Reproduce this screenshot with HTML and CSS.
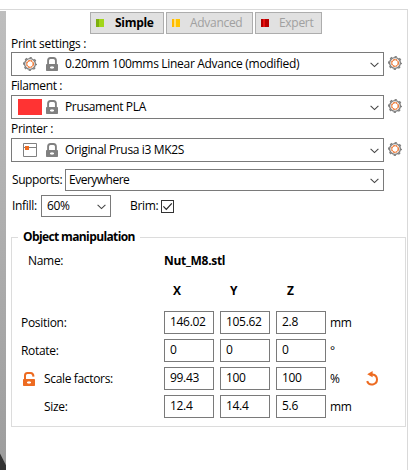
FILE: index.html
```html
<!DOCTYPE html>
<html lang="en">
<head>
<meta charset="utf-8">
<title>Print settings</title>
<link rel="stylesheet" href="styles.css">
</head>
<body>
<svg class="defs" aria-hidden="true">
  <symbol id="gear" viewBox="0 0 14 14">
    <circle cx="7" cy="7" r="5.4" fill="none" stroke="#808080" stroke-width="1.4"/>
    <circle cx="7" cy="7" r="6.3" fill="none" stroke="#808080" stroke-width="1.4" stroke-dasharray="2.3 2.648" stroke-dashoffset="1.15"/>
    <circle cx="7" cy="7" r="3.3" fill="none" stroke="#ed6b21" stroke-width="1.3" stroke-dasharray="2.1 .49"/>
  </symbol>
  <symbol id="lock" viewBox="0 0 12 14">
    <path d="M2.1 8V3.6Q2.1 1 4.5 1h3Q9.9 1 9.9 3.6V8" fill="none" stroke="#808080" stroke-width="1.9"/>
    <rect y="7" width="12" height="7" rx=".7" fill="#808080"/>
    <path d="M4 10.5h4M6 9.3v2.4" stroke="#fff" stroke-width="1.3"/>
  </symbol>
  <symbol id="unlock" viewBox="0 0 12 14">
    <path d="M2 8V3.6Q2 1 4.4 1h3.2Q10.3 1 10.5 4.6" fill="none" stroke="#ed6b21" stroke-width="2"/>
    <rect y="7" width="12" height="7" rx=".7" fill="#ed6b21"/>
    <path d="M4 10.5h4M6 9.3v2.4" stroke="#fff" stroke-width="1.3"/>
  </symbol>
  <symbol id="chevron" viewBox="0 0 9 6">
    <path d="M.6 .8l3.9 3.8L8.4 .8" fill="none" stroke="#444" stroke-width="1.1"/>
  </symbol>
</svg>
<div class="viewport"></div>
<main class="sidebar">
  <div class="modes">
    <button class="mode simple active"><i></i><span>Simple</span></button>
    <button class="mode advanced"><i></i><span>Advanced</span></button>
    <button class="mode expert"><i></i><span>Expert</span></button>
  </div>
  <div class="label l-print"><span>Print settings :</span></div>
  <div class="preset">
    <div class="combo"><svg class="pic"><use href="#gear"/></svg><svg class="lock"><use href="#lock"/></svg><span class="t-preset">0.20mm 100mms Linear Advance (modified)</span><svg class="chev"><use href="#chevron"/></svg></div>
    <svg class="edit"><use href="#gear"/></svg>
  </div>
  <div class="label l-fil"><span>Filament :</span></div>
  <div class="preset">
    <div class="combo"><i class="swatch"></i><svg class="lock"><use href="#lock"/></svg><span class="t-pla">Prusament PLA</span><svg class="chev"><use href="#chevron"/></svg></div>
    <svg class="edit"><use href="#gear"/></svg>
  </div>
  <div class="label l-printer"><span>Printer :</span></div>
  <div class="preset">
    <div class="combo"><svg class="pic" viewBox="0 0 14 14"><path d="M.5 .5h13v13H.5zM0 4.5h14" fill="none" stroke="#808080"/><rect x="2" y="3" width="4" height="4" fill="#ed6b21"/></svg><svg class="lock"><use href="#lock"/></svg><span class="t-mk">Original Prusa i3 MK2S</span><svg class="chev"><use href="#chevron"/></svg></div>
    <svg class="edit"><use href="#gear"/></svg>
  </div>
  <div class="supports"><span class="cap t-sup">Supports:</span><div class="combo small"><span class="t-every">Everywhere</span><svg class="chev"><use href="#chevron"/></svg></div></div>
  <div class="infill"><span class="cap t-inf">Infill:</span><div class="combo small"><span class="t-num">60%</span><svg class="chev"><use href="#chevron"/></svg></div><span class="brim">Brim:</span><svg class="check" viewBox="0 0 13 13"><rect x=".5" y=".5" width="12" height="12" fill="#fff" stroke="#333"/><path d="M2.4 6.4l2.9 2.9 5.5-6" fill="none" stroke="#222" stroke-width="1.2"/></svg></div>
  <fieldset class="group">
    <legend>Object manipulation</legend>
    <div class="name"><span>Name:</span><b>Nut_M8.stl</b></div>
    <div class="row axes"><span></span><b>X</b><b>Y</b><b>Z</b></div>
    <div class="row"><span class="t-pos">Position:</span><div class="field">146.02</div><div class="field">105.62</div><div class="field">2.8</div><span class="unit">mm</span></div>
    <div class="row"><span class="t-rot">Rotate:</span><div class="field">0</div><div class="field">0</div><div class="field">0</div><span class="unit">°</span></div>
    <div class="row"><span class="scale"><svg class="lock"><use href="#unlock"/></svg><em>Scale factors:</em></span><div class="field">99.43</div><div class="field">100</div><div class="field">100</div><span class="unit">%</span><svg class="reset" viewBox="0 0 13 15"><path d="M4.5 3.4h2a5.1 5.1 0 1 1-5.4 6.8" fill="none" stroke="#ed6b21" stroke-width="2"/><path d="M1.2 3.2L6.6 0v6.3z" fill="#ed6b21"/></svg></div>
    <div class="row"><span class="size">Size:</span><div class="field">12.4</div><div class="field">14.4</div><div class="field">5.6</div><span class="unit">mm</span></div>
  </fieldset>
</main>
</body>
</html>
```
FILE: styles.css
```css
* { box-sizing: border-box; }
body {
  margin: 0; width: 410px; height: 470px; overflow: hidden; background: #fff;
  display: flex; align-items: flex-start; color: #000;
  font: 12px/16px "Open Sans", "Noto Sans", sans-serif; letter-spacing: -.3px; white-space: nowrap;
}
.defs { position: absolute; width: 0; height: 0; }
svg { display: block; flex: none; }
.viewport {
  width: 6px; height: 459px; margin-top: 11px; flex: none;
  background: linear-gradient(63deg, #333 0 7px, transparent 8px) bottom / 6px 18px no-repeat, linear-gradient(#bebebe, #9d9d9d);
}
.sidebar { width: 402px; height: 461px; margin-top: 9px; padding: 3px 0 0 5px; border-right: 1px solid #d9d9d9; position: relative; }
.sidebar::before { content: ""; position: absolute; left: -6px; right: 0; top: 0; height: 1px; background: #d9d9d9; }
.modes { display: flex; gap: 2px; margin-left: 79px; height: 22px; }
.mode {
  width: 74px; padding: 0 0 0 5px; border: 1px solid #adadad; background: #e1e1e1; color: #a0a0a0;
  font: inherit; letter-spacing: inherit; display: flex; align-items: center;
}
.mode i { width: 8px; height: 8px; margin-right: 11px; }
.active { color: #000; font-weight: 700; }
.simple i { background: linear-gradient(90deg, #7daf10 3px, #a2d61a 3px); }
.advanced { width: 87px; }
.advanced i { background: linear-gradient(90deg, #ffb800 2px, #ffe07a 2px 4px, #ffc400 4px); margin-right: 10px; }
.expert { width: 67px; }
.expert i { background: linear-gradient(90deg, #b00000 2px, #e81010 2px 4px, #b80000 4px); margin-right: 10px; }
.label { height: 19px; line-height: 20px; }
.l-print { height: 18px; line-height: 19px; }
.l-fil { letter-spacing: -.35px; }
.l-printer { letter-spacing: -.3px; }
.preset { display: flex; height: 24px; }
.combo { width: 373px; height: 24px; border: 1px solid #7a7a7a; display: flex; align-items: center; position: relative; background: #fff; }
.combo .pic { width: 14px; height: 14px; margin: 0 9px 0 11px; }
.lock { width: 12px; height: 14px; }
.combo .lock { margin-right: 7px; }
.swatch { width: 24px; height: 16px; background: #f33; margin: 0 4px 0 6px; }
.t-preset { letter-spacing: -.31px; }
.t-pla { letter-spacing: -.36px; }
.t-mk { letter-spacing: -.34px; }
.t-every { letter-spacing: -.5px; }
.t-sup { letter-spacing: -.42px; }
.chev { width: 9px; height: 6px; margin: 2px 4px 0 auto; }
.edit { width: 14px; height: 14px; margin: 4px 0 0 4px; }
.small { height: 22px; padding-left: 3px; }
.supports { display: flex; margin-top: 7px; height: 22px; line-height: 22px; }
.supports .cap { width: 54px; padding-left: 1px; }
.supports .combo { width: 319px; }
.infill { display: flex; margin-top: 4px; height: 22px; line-height: 22px; }
.infill .cap { width: 30px; padding-left: 1px; }
.infill .combo { width: 70px; padding-left: 5px; }
.brim { width: 31px; margin-left: 19px; }
.check { width: 13px; height: 13px; margin: 5px 0 0; }
.group { margin: 11px 0 0; padding: 0; width: 395px; height: 199px; border: 1px solid #dcdcdc; min-width: 0; }
legend { margin-left: 6px; padding: 0 5px; height: 18px; line-height: 18px; font-weight: 700; letter-spacing: -.62px; }
.name { display: flex; height: 16px; margin: 7px 0 0 16px; }
.name span { width: 136px; }
.row { display: grid; grid-template-columns: 137px 50px 50px 50px auto auto; column-gap: 6px; height: 23px; margin: 0 0 5px 9px; align-items: center; justify-content: start; line-height: 15px; }
.axes { margin: 10px 0 9px 9px; }
.axes b { padding-left: 9px; }
.axes b:nth-child(3) { padding-left: 10px; }
.axes b:nth-child(4) { padding-left: 11px; }
.field { width: 50px; height: 23px; border: 1px solid #7a7a7a; padding-left: 5px; line-height: 20px; background: #fff; }
.unit { width: 30px; margin-left: -2px; }
.scale { display: flex; align-items: center; gap: 9px; padding-left: 2px; letter-spacing: -.34px; }
.scale em { font-style: normal; }
.size { padding-left: 23px; }
.reset { width: 13px; height: 15px; }
```
